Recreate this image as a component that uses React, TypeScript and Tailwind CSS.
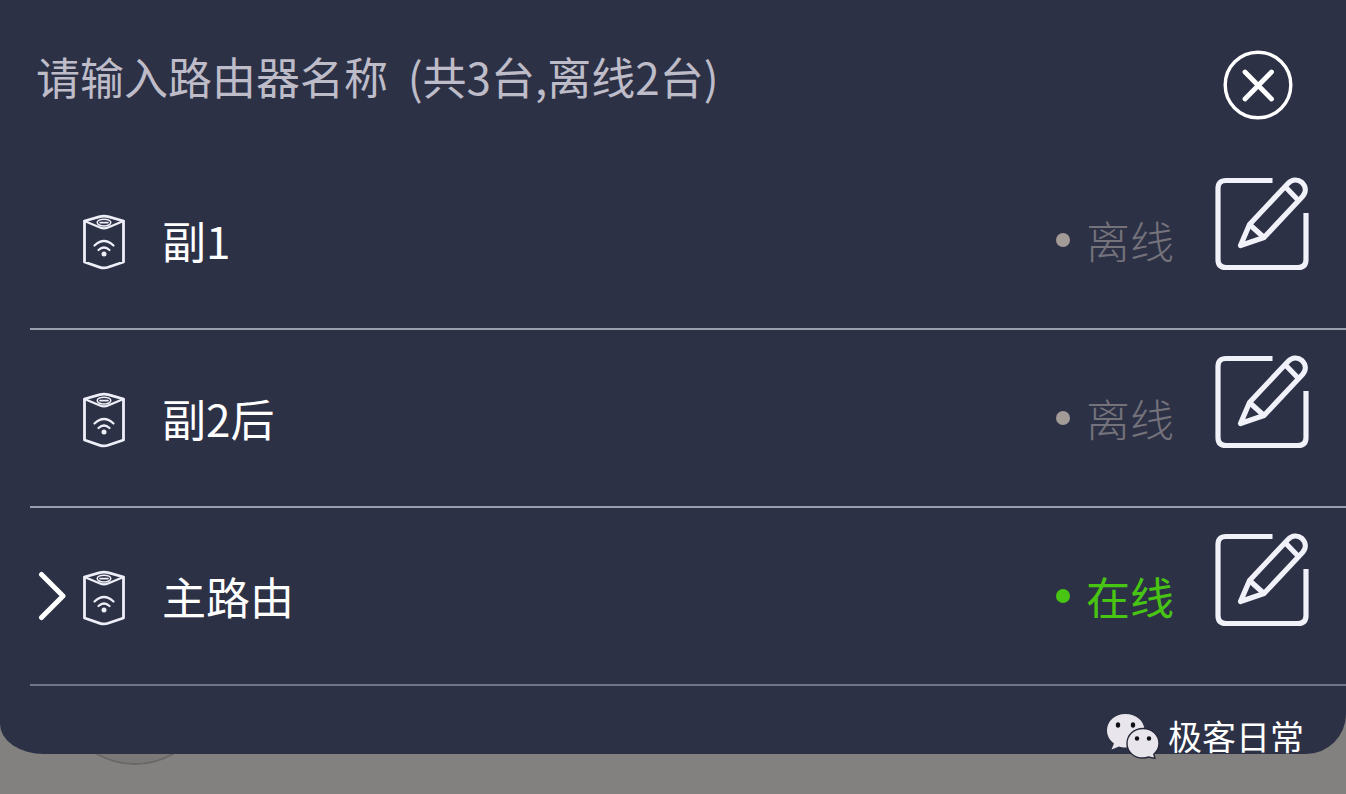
import { useState } from "react";

interface IRouter {
  id: number;
  name: string;
  online: boolean;
  current: boolean;
}

const routers: IRouter[] = [
  { id: 1, name: "副1", online: false, current: false },
  { id: 2, name: "副2后", online: false, current: false },
  { id: 3, name: "主路由", online: true, current: true },
];

function CloseIcon() {
  return (
    <svg viewBox="0 0 70 70" className="block size-[70px]" fill="none" stroke="currentColor" aria-hidden="true">
      <circle cx="35" cy="35" r="32.8" strokeWidth="3.4" />
      <path d="M22 22L48.500 49M48.500 22L22 49" strokeWidth="4.800" strokeLinecap="round" />
    </svg>
  );
}

function ChevronIcon() {
  return (
    <svg
      viewBox="0 0 28 50"
      className="h-[50px] w-7 text-white"
      fill="none"
      stroke="currentColor"
      aria-hidden="true"
    >
      <path d="M3.500 3.500L25 25L3.500 46.500" strokeWidth="5" strokeLinecap="round" strokeLinejoin="round" />
    </svg>
  );
}

function RouterIcon() {
  return (
    <svg
      viewBox="0 0 44 56"
      className="h-14 w-11 text-[#eeeef8]"
      fill="none"
      stroke="currentColor"
      strokeWidth="2.800"
      strokeLinecap="round"
      strokeLinejoin="round"
      aria-hidden="true"
    >
      <path d="M2.500 7L17 2.800Q22 1.600 27 2.800L41.500 7V48L26 53.300Q22 54.600 18 53.300L2.500 48Z" />
      <path d="M2.500 7L18 13.500Q22 15.200 26 13.500L41.500 7" strokeWidth="2.200" />
      <ellipse cx="22" cy="8.600" rx="6.800" ry="3.400" strokeWidth="1.500" />
      <path d="M18 8.600H26" strokeWidth="1.600" />
      <path d="M12.500 31.500Q22 22.500 31.500 31.500" strokeWidth="2.200" />
      <path d="M16.500 36Q22 31 27.500 36" strokeWidth="2.200" />
      <circle cx="22" cy="40" r="2.500" fill="currentColor" stroke="none" />
    </svg>
  );
}

function EditIcon() {
  return (
    <svg
      viewBox="0 0 96 96"
      className="block size-24 text-[#f0f1f9]"
      fill="none"
      stroke="currentColor"
      strokeWidth="5.200"
      strokeLinejoin="round"
      aria-hidden="true"
    >
      <path d="M58.500 4.500H12Q4 4.500 4 12.500V83.500Q4 91.500 12 91.500H84Q92 91.500 92 83.500V37" />
      <path d="M35.500 48.500L74 7.500C78 3 84 3 88 6.500C92 10.500 92.500 16 88.500 20.500L50 61.500L26.500 69.500Z" />
      <path d="M35.500 48.500L50 61.500M71.500 11L84.500 24.500" />
    </svg>
  );
}

function WechatIcon() {
  return (
    <svg viewBox="0 0 54 46" className="h-[46px] w-[54px]" aria-hidden="true">
      <path
        d="M19.500 1C9 1 1 8 1 17.500C1 23 4 27.500 8 30.500L5.500 36.500L13 33.500C15 34.200 17.500 34.500 19.500 34.500C30 34.500 38.500 27 38.500 17.500C38.500 8 30 1 19.500 1Z"
        fill="#e8e6ec"
      />
      <path
        d="M37 15.500C28 15.500 21 22 21 30.500C21 39 28 45 37 45C39 45 41 44.600 42.500 44L49 45.500L47.800 41.200C51 38.500 53 34.500 53 30.500C53 22 46 15.500 37 15.500Z"
        fill="#e8e6ec"
        stroke="#26283a"
        strokeWidth="1.400"
      />
      <g fill="#101018">
        <ellipse cx="12" cy="12" rx="2.200" ry="2.800" />
        <ellipse cx="27" cy="12" rx="2.200" ry="2.800" />
        <circle cx="31" cy="25.500" r="2.200" />
        <circle cx="43" cy="25.500" r="2.200" />
      </g>
    </svg>
  );
}

function RouterRow(prop: { router: IRouter }) {
  const { name, online, current } = prop.router;
  return (
    <li className="flex h-[178px] items-center border-b-2 border-[#9b9eac] pr-9 pl-2 last:border-[#71778a]">
      <div className="mr-4 w-7 shrink-0">{current && <ChevronIcon />}</div>
      <div className="shrink-0 pt-[3px]">
        <RouterIcon />
      </div>
      <p className="ml-9 flex-1 text-[44px] leading-[52px] text-white">{name}</p>
      <div className="flex items-center gap-4">
        <span className={`size-[14px] rounded-full ${online ? "bg-[#48c413]" : "bg-[#a39b97]"}`} />
        <p className={`text-[44px] leading-[52px] ${online ? "text-[#48c413]" : "font-light text-[#74727b]"}`}>
          {online ? "在线" : "离线"}
        </p>
      </div>
      <button type="button" aria-label={`编辑${name}`} className="mb-8 ml-10">
        <EditIcon />
      </button>
    </li>
  );
}

export default function App() {
  const [name, setName] = useState("");
  const offline = routers.filter((r) => !r.online).length;

  return (
    <div className="relative min-h-screen overflow-hidden bg-[#83817f] font-['Noto_Sans_CJK_SC',sans-serif]">
      <div className="absolute top-[611px] left-[58px] size-[154px] rounded-full border-2 border-[#6a6867] bg-[#7b7978]" />
      <main className="relative rounded-br-[40px] rounded-bl-[44px_30px] bg-[#2d3146] pb-[68px]">
        <header className="flex h-[152px] items-start justify-between pr-[53px] pl-9">
          <input
            type="text"
            aria-label="路由器名称"
            value={name}
            onChange={(e) => setName(e.target.value)}
            placeholder={`请输入路由器名称  (共${routers.length}台,离线${offline}台)`}
            className="mt-12 h-14 min-w-0 flex-1 bg-transparent text-[44px] leading-[56px] text-white outline-none placeholder:text-[#bdbcc8]"
          />
          <button type="button" aria-label="关闭" className="mt-[50px] text-white">
            <CloseIcon />
          </button>
        </header>
        <ul className="ml-[30px]">
          {routers.map((router) => (
            <RouterRow key={router.id} router={router} />
          ))}
        </ul>
        <div className="absolute right-[42px] -bottom-[5px] flex items-center gap-2">
          <WechatIcon />
          <span className="text-[34px] leading-[44px] text-white">极客日常</span>
        </div>
      </main>
    </div>
  );
}
